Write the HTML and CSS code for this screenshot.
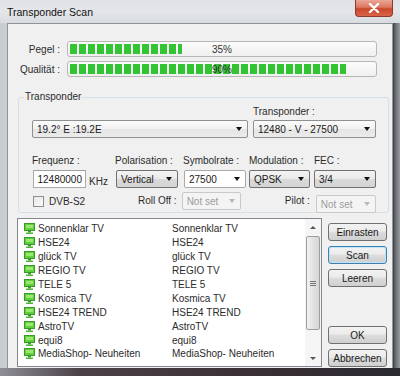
FILE: index.html
```html
<!DOCTYPE html>
<html>
<head>
<meta charset="utf-8">
<link rel="stylesheet" href="styles.css">
</head>
<body>
<div class="window">
  <div class="titlebar">
    <div class="title">Transponder Scan</div>
    <div class="close"><svg width="12" height="10" viewBox="0 0 12 10"><path d="M2 1 L10 9 M10 1 L2 9" stroke="#fff" stroke-width="2.4" stroke-linecap="round"/></svg></div>
  </div>
  <div class="mid">
    <div class="client">
      <div class="meters">
        <div class="meter-row">
          <div class="mlabel">Pegel :</div>
          <div class="bar"><div class="fill" style="width:112px"></div><div class="pct">35%</div></div>
        </div>
        <div class="meter-row">
          <div class="mlabel">Qualität :</div>
          <div class="bar"><div class="fill" style="width:276px"></div><div class="pct">90%</div></div>
        </div>
      </div>
      <div class="group">
        <div class="legend">Transponder</div>
        <div class="row-top">
          <div class="col-sat">
            <div class="combo light w216"><span>19.2° E :19.2E</span><i class="arr"></i></div>
          </div>
          <div class="col-tp">
            <div class="lbl">Transponder :</div>
            <div class="combo light w123"><span>12480 - V - 27500</span><i class="arr"></i></div>
          </div>
        </div>
        <div class="params">
          <div class="pc c1">
            <div class="lbl">Frequenz :</div>
            <div class="freq"><div class="tbox">12480000</div><span class="unit">KHz</span></div>
          </div>
          <div class="pc c2">
            <div class="lbl">Polarisation :</div>
            <div class="combo grey w62"><span>Vertical</span><i class="arr"></i></div>
          </div>
          <div class="pc c3">
            <div class="lbl">Symbolrate :</div>
            <div class="combo white w62"><span>27500</span><i class="arr"></i></div>
          </div>
          <div class="pc c4">
            <div class="lbl">Modulation :</div>
            <div class="combo grey w61"><span>QPSK</span><i class="arr"></i></div>
          </div>
          <div class="pc c5">
            <div class="lbl">FEC :</div>
            <div class="combo grey w62"><span>3/4</span><i class="arr"></i></div>
          </div>
        </div>
        <div class="row3">
          <div class="chk"><span class="box"></span><span>DVB-S2</span></div>
          <div class="rlbl roll">Roll Off :</div>
          <div class="combo dis w60"><span>Not set</span><i class="arr"></i></div>
          <div class="rlbl pilot">Pilot :</div>
          <div class="combo dis w61 low"><span>Not set</span><i class="arr"></i></div>
        </div>
      </div>
      <div class="bottom">
        <div class="list">
          <div class="items">
            <div class="item"><span class="c1n"><svg class="ico" viewBox="0 0 11 11"><rect x="0.5" y="0.5" width="10" height="7" fill="#5fcf3f" stroke="#3a9a28"/><rect x="2" y="2" width="7" height="3" fill="#9be86f"/><rect x="4" y="8" width="3" height="1.5" fill="#3a9a28"/><rect x="2" y="9.5" width="7" height="1.5" fill="#4cb534"/></svg>Sonnenklar TV</span><span class="c2n">Sonnenklar TV</span></div>
            <div class="item"><span class="c1n"><svg class="ico" viewBox="0 0 11 11"><rect x="0.5" y="0.5" width="10" height="7" fill="#5fcf3f" stroke="#3a9a28"/><rect x="2" y="2" width="7" height="3" fill="#9be86f"/><rect x="4" y="8" width="3" height="1.5" fill="#3a9a28"/><rect x="2" y="9.5" width="7" height="1.5" fill="#4cb534"/></svg>HSE24</span><span class="c2n">HSE24</span></div>
            <div class="item"><span class="c1n"><svg class="ico" viewBox="0 0 11 11"><rect x="0.5" y="0.5" width="10" height="7" fill="#5fcf3f" stroke="#3a9a28"/><rect x="2" y="2" width="7" height="3" fill="#9be86f"/><rect x="4" y="8" width="3" height="1.5" fill="#3a9a28"/><rect x="2" y="9.5" width="7" height="1.5" fill="#4cb534"/></svg>glück TV</span><span class="c2n">glück TV</span></div>
            <div class="item"><span class="c1n"><svg class="ico" viewBox="0 0 11 11"><rect x="0.5" y="0.5" width="10" height="7" fill="#5fcf3f" stroke="#3a9a28"/><rect x="2" y="2" width="7" height="3" fill="#9be86f"/><rect x="4" y="8" width="3" height="1.5" fill="#3a9a28"/><rect x="2" y="9.5" width="7" height="1.5" fill="#4cb534"/></svg>REGIO TV</span><span class="c2n">REGIO TV</span></div>
            <div class="item"><span class="c1n"><svg class="ico" viewBox="0 0 11 11"><rect x="0.5" y="0.5" width="10" height="7" fill="#5fcf3f" stroke="#3a9a28"/><rect x="2" y="2" width="7" height="3" fill="#9be86f"/><rect x="4" y="8" width="3" height="1.5" fill="#3a9a28"/><rect x="2" y="9.5" width="7" height="1.5" fill="#4cb534"/></svg>TELE 5</span><span class="c2n">TELE 5</span></div>
            <div class="item"><span class="c1n"><svg class="ico" viewBox="0 0 11 11"><rect x="0.5" y="0.5" width="10" height="7" fill="#5fcf3f" stroke="#3a9a28"/><rect x="2" y="2" width="7" height="3" fill="#9be86f"/><rect x="4" y="8" width="3" height="1.5" fill="#3a9a28"/><rect x="2" y="9.5" width="7" height="1.5" fill="#4cb534"/></svg>Kosmica TV</span><span class="c2n">Kosmica TV</span></div>
            <div class="item"><span class="c1n"><svg class="ico" viewBox="0 0 11 11"><rect x="0.5" y="0.5" width="10" height="7" fill="#5fcf3f" stroke="#3a9a28"/><rect x="2" y="2" width="7" height="3" fill="#9be86f"/><rect x="4" y="8" width="3" height="1.5" fill="#3a9a28"/><rect x="2" y="9.5" width="7" height="1.5" fill="#4cb534"/></svg>HSE24 TREND</span><span class="c2n">HSE24 TREND</span></div>
            <div class="item"><span class="c1n"><svg class="ico" viewBox="0 0 11 11"><rect x="0.5" y="0.5" width="10" height="7" fill="#5fcf3f" stroke="#3a9a28"/><rect x="2" y="2" width="7" height="3" fill="#9be86f"/><rect x="4" y="8" width="3" height="1.5" fill="#3a9a28"/><rect x="2" y="9.5" width="7" height="1.5" fill="#4cb534"/></svg>AstroTV</span><span class="c2n">AstroTV</span></div>
            <div class="item"><span class="c1n"><svg class="ico" viewBox="0 0 11 11"><rect x="0.5" y="0.5" width="10" height="7" fill="#5fcf3f" stroke="#3a9a28"/><rect x="2" y="2" width="7" height="3" fill="#9be86f"/><rect x="4" y="8" width="3" height="1.5" fill="#3a9a28"/><rect x="2" y="9.5" width="7" height="1.5" fill="#4cb534"/></svg>equi8</span><span class="c2n">equi8</span></div>
            <div class="item"><span class="c1n"><svg class="ico" viewBox="0 0 11 11"><rect x="0.5" y="0.5" width="10" height="7" fill="#5fcf3f" stroke="#3a9a28"/><rect x="2" y="2" width="7" height="3" fill="#9be86f"/><rect x="4" y="8" width="3" height="1.5" fill="#3a9a28"/><rect x="2" y="9.5" width="7" height="1.5" fill="#4cb534"/></svg>MediaShop- Neuheiten</span><span class="c2n">MediaShop- Neuheiten</span></div>
          </div>
          <div class="vscroll">
            <div class="sbtn"><i class="up"></i></div>
            <div class="thumb"><span class="grip"></span></div>
            <div class="sbtn"><i class="down"></i></div>
          </div>
        </div>
        <div class="buttons">
          <div class="btn">Einrasten</div>
          <div class="btn def">Scan</div>
          <div class="btn">Leeren</div>
          <div class="spacer"></div>
          <div class="btn">OK</div>
          <div class="btn">Abbrechen</div>
        </div>
      </div>
    </div>
    <div class="rframe"></div>
  </div>
  <div class="bframe"></div>
</div>
</body>
</html>
```

FILE: styles.css
```css
* { box-sizing: border-box; }
html, body { margin: 0; padding: 0; }
body {
  width: 400px; height: 376px; overflow: hidden;
  font-family: "Liberation Sans", Arial, sans-serif;
  font-size: 10px; color: #2b2b2b;
}
.window {
  width: 400px; height: 376px;
  display: flex; flex-direction: column;
  background: linear-gradient(90deg, #c9ccd1 0%, #d6d9dd 40%, #cfd3d8 70%, #b9bdc3 100%);
}
.titlebar {
  height: 23px; flex: none;
  display: flex; justify-content: space-between; align-items: flex-start;
  background: linear-gradient(180deg, #dfe2e6 0%, #e4e6e9 50%, #d8dbe0 100%);
}
.title {
  padding: 6px 0 0 7px;
  font-family: "Liberation Sans", sans-serif; font-size: 10.5px; color: #111;
}
.close {
  width: 38px; height: 17px; margin-right: 7px;
  border: 1px solid #8a3a2e; border-top: none;
  border-radius: 0 0 4px 4px;
  background: linear-gradient(180deg, #eaa797 0%, #dc7760 45%, #c9472c 55%, #d8644a 100%);
  display: flex; align-items: center; justify-content: center;
}
.mid { flex: 1; display: flex; padding-left: 7px; min-height: 0; }
.client {
  width: 386px; height: 345px; flex: none;
  background: #f0f0f0;
  border: 1px solid #8d949c; border-bottom: none;
  display: flex; flex-direction: column;
}
.rframe { flex: 1; background: linear-gradient(90deg, #3c3f45 0%, #6d7077 40%, #9a9ca1 100%); }
.bframe { height: 8px; flex: none; background: linear-gradient(90deg, #8e8e96 0%, #4b4147 20%, #3b3035 60%, #2a2a30 100%); }

.meters { padding: 17px 0 0 0; display: flex; flex-direction: column; gap: 4px; }
.meter-row { display: flex; align-items: center; height: 16px; }
.mlabel { width: 52px; text-align: right; }
.bar {
  margin-left: 7px; width: 310px; height: 16px; position: relative;
  border: 1px solid #b7b7b7; border-radius: 3px;
  background: linear-gradient(180deg, #fbfbfb, #f0f0f0);
  padding: 2px;
}
.fill {
  height: 10px;
  background: repeating-linear-gradient(90deg, #33c433 0 7px, transparent 7px 9px);
}
.pct { position: absolute; left: 0; right: 0; top: 2px; text-align: center; color: #333; }

.group {
  margin: 20px 0 0 10px; width: 371px; height: 116px;
  border: 1px solid #d5dfe5; border-radius: 3px;
  position: relative;
  padding: 7px 12px 0 13px;
}
.legend { position: absolute; left: 5px; top: -7px; background: #f0f0f0; padding: 0 1px; }
.lbl { height: 14px; line-height: 14px; }
.row-top { display: flex; align-items: flex-end; gap: 5px; }
.col-tp { display: flex; flex-direction: column; gap: 1px; }
.combo {
  height: 18px; border: 1px solid #8c8c8c; border-radius: 2px;
  display: flex; align-items: center; justify-content: space-between;
  padding: 0 5px 0 4px; color: #1a1a1a;
}
.combo.light { background: linear-gradient(180deg, #fbfbfb 0%, #f1f1f1 50%, #e5e5e5 51%, #ebebeb 100%); border-color: #8e8f8f; }
.combo.grey { background: linear-gradient(180deg, #f3f3f3 0%, #e9e9e9 50%, #d9d9d9 51%, #d4d4d4 100%); border-color: #707070; }
.combo.white { background: #fff; border-color: #a9a9a9; }
.combo.dis { background: #f4f4f4; border-color: #c9c9c9; color: #9c9c9c; }
.combo.dis .arr { border-top-color: #b8b8b8; }
.arr { width: 0; height: 0; border-left: 3.5px solid transparent; border-right: 3.5px solid transparent; border-top: 4px solid #111; }
.w216 { width: 216px; }
.w123 { width: 123px; }
.w62 { width: 62px; }
.w61 { width: 61px; }
.w60 { width: 60px; }

.params { display: flex; margin-top: 16px; }
.pc { display: flex; flex-direction: column; gap: 2px; }
.c1 { width: 83px; }
.c2 { width: 68px; }
.c3 { width: 66px; }
.c4 { width: 65px; }
.c5 { width: 62px; }
.c2 .combo, .c3 .combo { margin-left: 1px; }
.freq { display: flex; align-items: flex-end; }
.tbox {
  width: 53px; height: 18px; margin-left: 1px;
  background: #fff; border: 1px solid #ababab; border-top-color: #a0a0a0;
  text-align: right; padding: 3px 3px 0 0; color: #1a1a1a;
}
.unit { margin-left: 3px; line-height: 12px; }
.row3 { display: flex; align-items: flex-start; margin-top: 4px; height: 20px; }
.chk { display: flex; align-items: center; gap: 5px; width: 84px; margin-left: 1px; height: 18px; }
.box { width: 11px; height: 11px; border: 1px solid #8e8f8f; background: linear-gradient(135deg, #e8e8e8, #fafafa); }
.rlbl { text-align: right; height: 18px; line-height: 18px; }
.roll { width: 62px; margin-right: 5px; }
.pilot { width: 65px; margin-right: 6px; margin-left: 5px; }
.low { margin-top: 3px; }

.bottom { display: flex; margin-top: 5px; margin-left: 9px; }
.list {
  width: 305px; height: 149px;
  background: #fff; border: 1px solid #828790;
  display: flex;
}
.items { flex: 1; padding: 3px 0 0 6px; }
.item { display: flex; height: 13.9px; align-items: center; }
.c1n { width: 148px; display: flex; align-items: center; white-space: nowrap; }
.ico { width: 11px; height: 11px; margin-right: 3px; flex: none; }
.c2n { white-space: nowrap; }
.vscroll { width: 16px; display: flex; flex-direction: column; padding: 0 1px; background: #f5f5f5; }
.sbtn { height: 16px; display: flex; align-items: center; justify-content: center; }
.up { width: 0; height: 0; border-left: 3px solid transparent; border-right: 3px solid transparent; border-bottom: 3px solid #555; }
.down { width: 0; height: 0; border-left: 3px solid transparent; border-right: 3px solid transparent; border-top: 3px solid #555; }
.thumb {
  flex: 1; margin: 1px 0 20px 0;
  border: 1px solid #9e9e9e; border-radius: 2px;
  background: linear-gradient(90deg, #f2f2f2, #e2e2e2 50%, #d6d6d6);
  display: flex; align-items: center; justify-content: center;
}
.grip { width: 6px; height: 5px; border-top: 1px solid #777; border-bottom: 1px solid #777; position: relative; }
.grip::after { content: ""; position: absolute; left: 0; right: 0; top: 1px; border-top: 1px solid #777; }

.buttons { display: flex; flex-direction: column; margin-left: 6px; padding-top: 5px; gap: 5px; width: 59px; height: 149px; }
.btn {
  height: 18px; width: 59px;
  border: 1px solid #707070; border-radius: 3px;
  background: linear-gradient(180deg, #f2f2f2 0%, #ebebeb 45%, #dddddd 50%, #cfcfcf 100%);
  display: flex; align-items: center; justify-content: center; color: #1a1a1a;
}
.btn.def { border-color: #3c7fb1; box-shadow: inset 0 0 0 1px #bfe3f7; }
.spacer { flex: 1; }
```
